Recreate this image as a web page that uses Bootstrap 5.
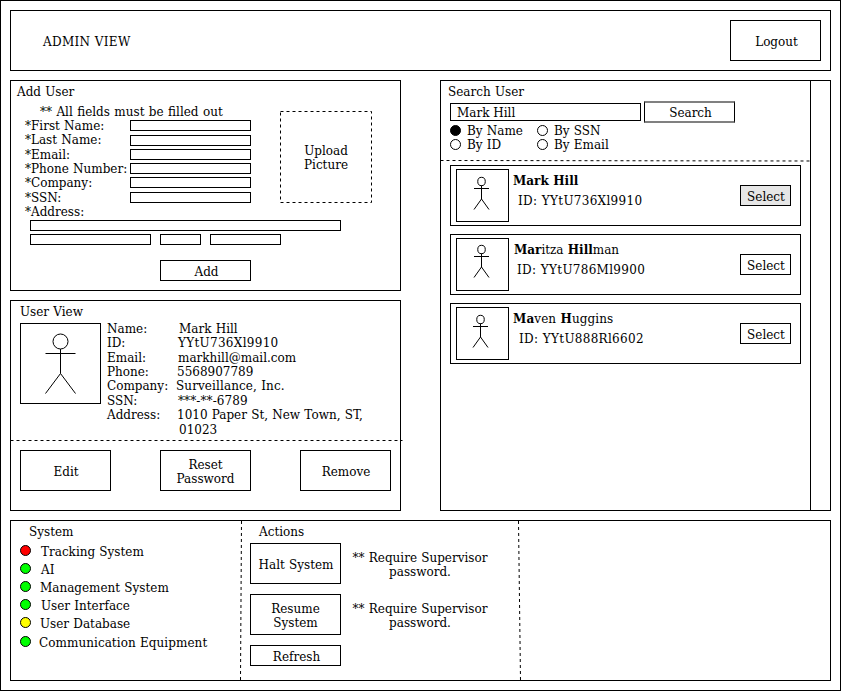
<!DOCTYPE html>
<html lang="en">
<head>
<meta charset="utf-8">
<meta name="viewport" content="width=device-width, initial-scale=1">
<title>Admin View</title>
<link href="https://cdn.jsdelivr.net/npm/bootstrap@5.3.0/dist/css/bootstrap.min.css" rel="stylesheet">
<style>
  body { font-family: "DejaVu Serif", serif; font-size: 12px; line-height: 14px; word-spacing: .4px; color: #000; background: #fff; }
  .frame { width: 841px; height: 691px; padding: 9px; gap: 9px; }
  .frame, .panel { border: 1px solid #000; }
  .topbar { height: 61px; padding: 0 9px 0 32px; }
  .spaced { letter-spacing: .3px; }
  .btn, .btn:hover { font: inherit; word-spacing: .4px; line-height: 14px; color: #000; background: #fff; border: 1px solid #000; border-radius: 0; width: 91px; height: 41px; padding: 2px 0 0 1px; display: flex; align-items: center; justify-content: center; flex: none; }
  .btn.short { height: 21px; }
  .btn.nudge { padding-left: 2px; }
  .btn.duo { padding-left: 0; }
  .btn.pick { width: 51px; height: 21px; }
  .btn.picked { background: #e6e6e6; }
  .btn.find { height: 22px; border-top: 2px solid #808080; border-bottom: 2px solid #808080; }
  .form-control, .form-control:focus { font: inherit; color: #000; border: 1px solid #000; border-radius: 0; padding: 0; height: 11px; min-height: 0; background: #fff; box-shadow: none; }
  .left-col, .search-panel { width: 391px; }
  .stack9 { gap: 9px; }
  .half { height: 211px; }
  .add-title { padding: 4px 0 0 6px; height: 24px; }
  .field-grid { display: grid; grid-template-columns: 105px 121px; grid-template-rows: 14px 15px 14px 14px 15px 14px 14px; margin-left: 14px; width: 226px; white-space: nowrap; }
  .field-grid .form-control { margin-top: 1px; }
  .field-grid .form-control.drop { margin-top: 2px; }
  .hint { padding-left: 29px; height: 14px; white-space: nowrap; word-spacing: .6px; }
  .upload { width: 92px; height: 92px; margin: 6px 28px 0 0; padding-top: 1px; position: relative; }
  .upload svg { position: absolute; inset: 0; }
  .address { padding: 1px 0 0 19px; }
  .address .wide { width: 311px; margin-bottom: 3px; }
  .w121 { width: 121px; } .w41 { width: 41px; } .w71 { width: 71px; }
  .portrait { width: 81px; height: 81px; border: 1px solid #000; }
  .facts { display: grid; grid-template-columns: 69px 1fr; grid-template-rows: 14px 15px 14px 14px 15px 14px 15px 14px; margin: -1px 0 0 6px; white-space: nowrap; }
  .n1 { padding-left: 1px; } .n2 { padding-left: 2px; } .n3 { padding-left: 3px; }
  .rule { display: block; overflow: visible; stroke: #000; stroke-dasharray: 3 3; fill: none; height: 1px; }
  .search-main { width: 370px; border-right: 1px solid #000; }
  .search-box { width: 191px; height: 18px !important; padding: 2px 0 0 6px !important; }
  .radios { display: grid; grid-template-columns: 87px 100px; margin: 1px 0 0 9px; white-space: nowrap; }
  .radios > div { gap: 6px; }
  .radios .dot { margin-top: 1px; }
  .dot { width: 11px; height: 11px; border: 1px solid #000; border-radius: 50%; flex: none; }
  .dot.on { background: #000; } .dot.red { background: #f00; } .dot.green { background: #0f0; } .dot.yellow { background: #ff0; }
  .hit { width: 351px; height: 61px; border: 1px solid #000; padding: 3px 9px 0 5px; }
  .thumb { width: 53px; height: 53px; border: 1px solid #000; flex: none; }
  .hit-text { padding-top: 5px; margin-left: 4px; }
  .hit .pick { margin-top: 16px; }
  .figure-svg { display: block; stroke: #000; fill: none; }
  .bottom { height: 161px; position: relative; }
  .bottom > svg { position: absolute; left: 0; top: 0; overflow: visible; stroke: #000; stroke-dasharray: 3 3; }
  .status { width: 230px; padding: 4px 0 0 9px; }
  .status li { height: 18px; display: flex; }
  .actions { padding: 4px 0 0 9px; }
  .note { width: 140px; padding-top: 8px; margin-left: 9px; }
</style>
<script src="https://cdn.jsdelivr.net/npm/bootstrap@5.3.0/dist/js/bootstrap.bundle.min.js"></script>
</head>
<body>
<div class="frame d-flex flex-column">
  <header class="topbar panel d-flex align-items-center justify-content-between">
    <span class="spaced" style="padding-top:2px">ADMIN VIEW</span>
    <button class="btn nudge">Logout</button>
  </header>

  <main class="d-flex justify-content-between">
    <div class="left-col stack9 d-flex flex-column">
      <section class="panel half">
        <div class="add-title">Add User</div>
        <div class="d-flex justify-content-between">
          <div>
            <div class="hint">** All fields must be filled out</div>
            <div class="field-grid">
              <label>*First Name:</label><input class="form-control" aria-label="First name">
              <label>*Last Name:</label><input class="form-control drop" aria-label="Last name">
              <label>*Email:</label><input class="form-control" aria-label="Email">
              <label>*Phone Number:</label><input class="form-control" aria-label="Phone">
              <label>*Company:</label><input class="form-control" aria-label="Company">
              <label>*SSN:</label><input class="form-control" aria-label="SSN">
              <label>*Address:</label>
            </div>
          </div>
          <div class="upload d-flex align-items-center justify-content-center text-center">
            <svg width="92" height="92"><rect x=".5" y=".5" width="91" height="91" fill="none" stroke="#000" stroke-dasharray="3 3"/></svg>
            <span>Upload<br>Picture</span>
          </div>
        </div>
        <div class="address">
          <input class="form-control wide" aria-label="Street">
          <div class="stack9 d-flex">
            <input class="form-control w121" aria-label="City"><input class="form-control w41" aria-label="State"><input class="form-control w71" aria-label="Zip">
          </div>
        </div>
        <div class="d-flex" style="padding:15px 0 0 149px"><button class="btn short nudge">Add</button></div>
      </section>

      <section class="panel half">
        <div style="padding:4px 0 0 9px;height:22px">User View</div>
        <div class="d-flex" style="padding-left:9px;height:117px">
          <div class="portrait">
            <svg class="figure-svg" width="79" height="79"><ellipse cx="39.5" cy="17.5" rx="7.5" ry="7.5"/><path d="M39.5 25V49.500M24.500 29.500H54.500M39.500 49.500L24.500 69.500M39.500 49.500L54.500 69.500"/></svg>
          </div>
          <div class="facts">
            <span>Name:</span><span class="n3">Mark Hill</span>
            <span>ID:</span><span class="n2 spaced">YYtU736Xl9910</span>
            <span>Email:</span><span class="n2">markhill@mail.com</span>
            <span>Phone:</span><span class="n1">5568907789</span>
            <span>Company:</span><span style="letter-spacing:.1px">Surveillance, Inc.</span>
            <span>SSN:</span><span class="n2" style="letter-spacing:.1px">***-**-6789</span>
            <span>Address:</span><span class="n1">1010 Paper St, New Town, ST,</span>
            <span></span><span class="n3">01023</span>
          </div>
        </div>
        <svg class="rule" width="389"><path d="M-.5 .5H391.500"/></svg>
        <div class="d-flex justify-content-between" style="padding:9px 9px 0">
          <button class="btn">Edit</button>
          <button class="btn duo">Reset<br>Password</button>
          <button class="btn">Remove</button>
        </div>
      </section>
    </div>

    <section class="search-panel panel">
      <div class="search-main h-100">
        <div style="padding:4px 0 0 7px;height:20px">Search User</div>
        <div class="d-flex" style="padding-left:9px;height:22px;gap:3px">
          <input class="form-control search-box" style="margin-top:2px" value="Mark Hill" aria-label="Search text">
          <button class="btn find nudge">Search</button>
        </div>
        <div class="radios">
          <div class="d-flex"><span class="dot on"></span><span>By Name</span></div>
          <div class="d-flex"><span class="dot"></span><span>By SSN</span></div>
          <div class="d-flex"><span class="dot"></span><span>By ID</span></div>
          <div class="d-flex"><span class="dot"></span><span>By Email</span></div>
        </div>
        <svg class="rule" width="370" style="margin-top:8px"><path d="M-.5 .5L370 1"/></svg>
        <div class="d-flex flex-column" style="padding:4px 0 0 9px;gap:8px">
          <article class="hit d-flex">
            <div class="thumb"><svg class="figure-svg" width="51" height="51"><ellipse cx="24.500" cy="11.500" rx="3.750" ry="4.200"/><path d="M24.500 15.500V29M17 18.500H32M24.500 29L17 39.500M24.500 29L32 39.500"/></svg></div>
            <div class="hit-text flex-grow-1"><div><b>Mark Hill</b></div><div class="spaced" style="padding:6px 0 0 5px">ID: YYtU736Xl9910</div></div>
            <button class="btn pick picked">Select</button>
          </article>
          <article class="hit d-flex">
            <div class="thumb"><svg class="figure-svg" width="51" height="51"><ellipse cx="24.500" cy="10.500" rx="3.750" ry="4.200"/><path d="M24.500 14.500V28M17 17.500H32M24.500 28L17 38.500M24.500 28L32 38.500"/></svg></div>
            <div class="hit-text flex-grow-1"><div style="padding-left:1px"><b>Mar</b>itza <b>Hill</b>man</div><div class="spaced" style="padding:6px 0 0 4px">ID: YYtU786Ml9900</div></div>
            <button class="btn pick">Select</button>
          </article>
          <article class="hit d-flex">
            <div class="thumb"><svg class="figure-svg" width="51" height="51"><ellipse cx="23.500" cy="11.500" rx="3.750" ry="4.200"/><path d="M23.500 15.500V29M16 18.500H31M23.500 29L16 39.500M23.500 29L31 39.500"/></svg></div>
            <div class="hit-text flex-grow-1"><div style="letter-spacing:.1px"><b>Ma</b>ven <b>H</b>uggins</div><div class="spaced" style="padding:6px 0 0 6px">ID: YYtU888Rl6602</div></div>
            <button class="btn pick">Select</button>
          </article>
        </div>
      </div>
    </section>
  </main>

  <section class="bottom panel d-flex">
    <svg width="819" height="159"><path d="M230.500 0L229.500 159"/><path d="M507.500 0L509.500 159"/></svg>
    <div class="status">
      <div style="padding-left:9px;height:20px">System</div>
      <ul class="list-unstyled mb-0">
        <li><span class="dot red"></span><span style="margin-left:10px">Tracking System</span></li>
        <li><span class="dot green"></span><span style="margin-left:10px">AI</span></li>
        <li><span class="dot green"></span><span style="margin-left:9px">Management System</span></li>
        <li><span class="dot green"></span><span style="margin-left:10px">User Interface</span></li>
        <li style="height:19px"><span class="dot yellow"></span><span style="margin-left:9px">User Database</span></li>
        <li><span class="dot green"></span><span style="margin-left:8px;letter-spacing:.06px">Communication Equipment</span></li>
      </ul>
    </div>
    <div class="actions">
      <div style="padding-left:9px;height:18px">Actions</div>
      <div class="d-flex flex-column" style="gap:10px">
        <div class="d-flex"><button class="btn">Halt System</button><div class="note text-center">** Require Supervisor password.</div></div>
        <div class="d-flex"><button class="btn duo">Resume<br>System</button><div class="note text-center">** Require Supervisor password.</div></div>
        <button class="btn short nudge">Refresh</button>
      </div>
    </div>
  </section>
</div>
</body>
</html>
